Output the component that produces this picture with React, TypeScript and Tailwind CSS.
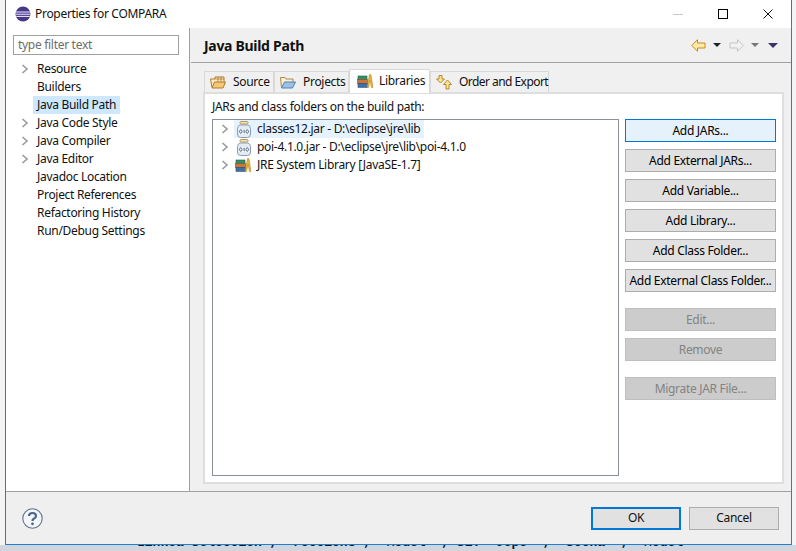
import type { ReactNode } from "react"

const sidebarItems = [
  { label: "Resource", arrow: true },
  { label: "Builders" },
  { label: "Java Build Path", selected: true },
  { label: "Java Code Style", arrow: true },
  { label: "Java Compiler", arrow: true },
  { label: "Java Editor", arrow: true },
  { label: "Javadoc Location" },
  { label: "Project References" },
  { label: "Refactoring History" },
  { label: "Run/Debug Settings" },
]

function Chevron() {
  return (
    <svg width="8" height="10" viewBox="0 0 8 10" fill="none" className="shrink-0">
      <path d="M1.5 1 L6 5 L1.5 9" stroke="#9a9a9a" strokeWidth="1.6" />
    </svg>
  )
}

function JarIcon() {
  return (
    <svg width="14" height="17" viewBox="0 0 14 17" className="shrink-0">
      <rect x="3" y="0.5" width="8" height="2.5" rx="1" fill="#f3e3b8" stroke="#b89a5a" />
      <path d="M3 4 H11 Q13.5 5 13.5 7.5 V13 Q13.5 16.5 10.5 16.5 H3.5 Q0.5 16.5 0.5 13 V7.5 Q0.5 5 3 4 Z" fill="#e4ebf3" stroke="#8b9cb3" />
      <rect x="2" y="8" width="10" height="5" fill="#fff" />
      <ellipse cx="3.8" cy="10.5" rx="1.2" ry="1.8" fill="none" stroke="#3d5a80" strokeWidth="0.9" />
      <rect x="6.6" y="8.7" width="1" height="3.6" fill="#3d5a80" />
      <ellipse cx="10.2" cy="10.5" rx="1.2" ry="1.8" fill="none" stroke="#3d5a80" strokeWidth="0.9" />
    </svg>
  )
}

function BooksIcon() {
  return (
    <svg width="16" height="14" viewBox="0 0 16 14" className="shrink-0">
      <rect x="1" y="2" width="9" height="3.5" fill="#2f8f6b" stroke="#1f5f50" strokeWidth="0.6" />
      <rect x="0.5" y="5.5" width="10" height="3.8" fill="#c8763a" stroke="#8a4a20" strokeWidth="0.6" />
      <rect x="1" y="9.5" width="9.5" height="3.8" fill="#3f6fa8" stroke="#27466e" strokeWidth="0.6" />
      <path d="M10 13.5 L12.5 0.5 L14 0.8 L16 13.5 L14.4 13.5 L13 6 L11.6 13.5 Z" fill="#eab63c" stroke="#a87a18" strokeWidth="0.5" />
    </svg>
  )
}

function SourceIcon() {
  return (
    <svg width="16" height="14" viewBox="0 0 16 14" className="shrink-0">
      <path d="M2 12.5 L0.5 4 H5 V2 H14 V7" fill="#fbeec9" stroke="#b07a2c" />
      <path d="M8 1.5 V7 M11 1.5 V7 M5 4 H14" stroke="#b07a2c" strokeWidth="0.8" />
      <path d="M2 13 L4.5 7 H15.5 L13 13 Z" fill="#f5c878" stroke="#b07a2c" />
    </svg>
  )
}

function ProjectsIcon() {
  return (
    <svg width="16" height="14" viewBox="0 0 16 14" className="shrink-0">
      <path d="M1.5 12.5 L0.5 2.5 H5 L6 4 H13 V7" fill="#faf0d4" stroke="#a98a50" />
      <path d="M1.5 13 L4.5 7 H15.5 L12.5 13 Z" fill="#9cc1e6" stroke="#5580ad" />
    </svg>
  )
}

function OrderIcon() {
  return (
    <svg width="16" height="15" viewBox="0 0 16 15" className="shrink-0">
      <path d="M3 0.5 H6 V4 H8.5 L4.5 8 L0.5 4 H3 Z" fill="#fbe39a" stroke="#b58a2a" />
      <path d="M11.5 5 L15.5 9.5 H13 V14 H10 V9.5 H7.5 Z" fill="#fbe39a" stroke="#b58a2a" />
    </svg>
  )
}

function Tab({ icon, label, selected, className }: { icon: ReactNode; label: string; selected?: boolean; className: string }) {
  return (
    <div
      className={
        selected
          ? `flex items-center gap-[6px] whitespace-nowrap bg-white border border-b-0 border-[#d9d9d9] h-[24px] -mb-px pb-[2px] pl-[7px] z-10 ${className}`
          : `flex items-center gap-[7px] whitespace-nowrap bg-[#f0f0f0] border border-b-0 border-[#d9d9d9] h-[21px] pl-[5px] ${className}`
      }
    >
      {icon}
      <span>{label}</span>
    </div>
  )
}

function Button({ label, focus, disabled, className = "" }: { label: string; focus?: boolean; disabled?: boolean; className?: string }) {
  let look = "bg-[#e1e1e1] border-[#adadad] text-black"
  if (focus) look = "bg-[#e5f1fb] border-[#0078d7] text-black"
  if (disabled) look = "bg-[#cccccc] border-[#bfbfbf] text-[#838383]"
  return (
    <div className={`h-[23px] flex items-center justify-center border-[1.5px] whitespace-nowrap ${look} ${className}`}>
      {label}
    </div>
  )
}

function TreeRow({ icon, label, selected, iconClass }: { icon: ReactNode; label: string; selected?: boolean; iconClass: string }) {
  return (
    <div className="flex items-center h-[18px]">
      <div className="w-[21px] pl-[8px]">
        <Chevron />
      </div>
      <div className={`flex items-center h-[18px] ${selected ? "bg-[#e5f3ff] pr-[4px]" : ""} ${iconClass}`}>
        {icon}
        <span className="ml-[6px] whitespace-nowrap">{label}</span>
      </div>
    </div>
  )
}

export default function App() {
  return (
    <div className="w-[796px] h-[551px] overflow-hidden bg-[#f4f4f6] text-[12px] tracking-[-0.3px] text-[#111] font-['Noto_Sans',sans-serif] flex flex-col">
      {/* dialog window */}
      <div className="ml-[5px] w-[787px] h-[545px] shrink-0 border-x border-b border-[#1883d7] bg-white flex flex-col relative z-10">
        <div className="h-[28px] shrink-0 flex items-center pl-[9px] bg-white">
          <svg width="16" height="16" viewBox="0 0 16 16" className="shrink-0">
            <circle cx="8" cy="8" r="7.5" fill="#473788" />
            <path d="M0.8 6 H15.2 M0.8 8.2 H15.2 M1.2 10.4 H14.8" stroke="#f4eefc" strokeWidth="1" />
          </svg>
          <span className="ml-[4px]">Properties for COMPARA</span>
          <div className="ml-auto flex items-center">
            <div className="w-[10px] h-px bg-[#c8c8c8] mr-[35px]" />
            <div className="w-[10px] h-[10px] border border-black mr-[35px]" />
            <svg width="10" height="10" viewBox="0 0 10 10" className="mr-[18px]">
              <path d="M0.5 0.5 L9.5 9.5 M9.5 0.5 L0.5 9.5" stroke="#111" strokeWidth="1" />
            </svg>
          </div>
        </div>

        <div className="flex flex-1 min-h-0">
          {/* left tree */}
          <div className="w-[184px] shrink-0 border-r border-[#a0a0a0] bg-white pl-[7px] pt-[7px]">
            <div className="w-[166px] h-[20px] border border-[#a0a0a0] flex items-center pl-[4px] text-[#6d6d6d]">type filter text</div>
            <div className="mt-[5px]">
              {sidebarItems.map((item) => (
                <div key={item.label} className="flex items-center h-[18px]">
                  <div className="w-[20px] pl-[8px]">{item.arrow && <Chevron />}</div>
                  <span className={`px-[4px] h-[18px] flex items-center whitespace-nowrap ${item.selected ? "bg-[#cde8ff]" : ""}`}>{item.label}</span>
                </div>
              ))}
            </div>
          </div>

          {/* right page */}
          <div className="flex-1 min-w-0 bg-[#f0f0f0] flex flex-col">
            <div className="h-[35px] shrink-0 flex items-center border-b border-[#a0a0a0] ml-px pl-[13px]">
              <span className="text-[14px] font-bold">Java Build Path</span>
              <div className="ml-auto flex items-center pr-[13px]">
                <svg width="15" height="13" viewBox="0 0 15 13">
                  <path d="M6.5 0.7 L0.8 6.5 L6.5 12.3 V9 H14 V4 H6.5 Z" fill="#fde9a8" stroke="#c98a1c" />
                </svg>
                <div className="ml-[7px] w-0 h-0 border-x-[4px] border-x-transparent border-t-[4px] border-t-[#222]" />
                <svg width="15" height="13" viewBox="0 0 15 13" className="ml-[8px]">
                  <path d="M8.5 0.7 L14.2 6.5 L8.5 12.3 V9 H1 V4 H8.5 Z" fill="#f2f2f2" stroke="#c4c4c4" />
                </svg>
                <div className="ml-[7px] w-0 h-0 border-x-[4px] border-x-transparent border-t-[4px] border-t-[#777]" />
                <div className="ml-[9px] w-0 h-0 border-x-[5px] border-x-transparent border-t-[5px] border-t-[#3b3468]" />
              </div>
            </div>

            <div className="flex-1 min-h-0 pl-[13px] pr-[7px] pt-[6px] pb-[7px] flex flex-col">
              <div className="flex items-end h-[23px] shrink-0 pl-[1px]">
                <Tab icon={<SourceIcon />} label="Source" className="w-[70px]" />
                <Tab icon={<ProjectsIcon />} label="Projects" className="w-[75px]" />
                <Tab icon={<BooksIcon />} label="Libraries" selected className="w-[81px]" />
                <Tab icon={<OrderIcon />} label="Order and Export" className="w-[119px] tracking-[-0.55px]" />
              </div>
              <div className="flex-1 min-h-0 bg-white border-2 border-[#dedede] pl-[7px] pr-[6px] flex flex-col">
                <div className="h-[25px] shrink-0 flex items-center">JARs and class folders on the build path:</div>
                <div className="flex flex-1 min-h-0 gap-[6px] pb-[6px]">
                  <div className="w-[407px] shrink-0 border border-[#8a9099]">
                    <TreeRow icon={<JarIcon />} label="classes12.jar - D:\eclipse\jre\lib" selected iconClass="pl-[3px]" />
                    <TreeRow icon={<JarIcon />} label="poi-4.1.0.jar - D:\eclipse\jre\lib\poi-4.1.0" iconClass="pl-[3px]" />
                    <TreeRow icon={<BooksIcon />} label="JRE System Library [JavaSE-1.7]" iconClass="pl-[2px] -ml-px" />
                  </div>
                  <div className="flex-1 min-w-0 flex flex-col">
                    <Button label="Add JARs..." focus />
                    <Button label="Add External JARs..." className="mt-[7px]" />
                    <Button label="Add Variable..." className="mt-[7px]" />
                    <Button label="Add Library..." className="mt-[7px]" />
                    <Button label="Add Class Folder..." className="mt-[7px]" />
                    <Button label="Add External Class Folder..." className="mt-[7px]" />
                    <Button label="Edit..." disabled className="mt-[16px]" />
                    <Button label="Remove" disabled className="mt-[7px]" />
                    <Button label="Migrate JAR File..." disabled className="mt-[16px]" />
                  </div>
                </div>
              </div>
            </div>
          </div>
        </div>

        {/* footer */}
        <div className="h-[53px] shrink-0 border-t border-[#a0a0a0] bg-[#efefef] flex items-center pl-[16px] pr-[12px]">
          <svg width="21" height="21" viewBox="0 0 21 21">
            <circle cx="10.5" cy="10.5" r="9.7" fill="#f4f6fa" stroke="#5f7193" strokeWidth="1.1" />
            <path d="M7 8 Q7 5 10.5 5 Q14 5 14 8 Q14 9.8 11.8 10.8 Q10.5 11.5 10.5 13" fill="none" stroke="#4f6489" strokeWidth="2.2" />
            <circle cx="10.5" cy="15.8" r="1.4" fill="#4f6489" />
          </svg>
          <div className="ml-auto flex items-center gap-[8px]">
            <div className="w-[90px] h-[23px] border-2 border-[#0078d7] bg-[#e1e1e1] flex items-center justify-center">OK</div>
            <div className="w-[90px] h-[23px] border-[1.5px] border-[#adadad] bg-[#e1e1e1] flex items-center justify-center">Cancel</div>
          </div>
        </div>
      </div>

      {/* text of the window behind, only the bottom edge shows */}
      <div className="flex-1 bg-[#d2d5dc] overflow-hidden pl-[137px]">
        <div className="-mt-[10px] font-['Liberation_Mono',monospace] font-bold text-[13px] tracking-normal leading-[15px] text-[#111] whitespace-pre">
          Linkea Seleccion , 'reccions , 'Model' , SET 'Jope' , 'Scena' , 'Model'
        </div>
      </div>
    </div>
  )
}
